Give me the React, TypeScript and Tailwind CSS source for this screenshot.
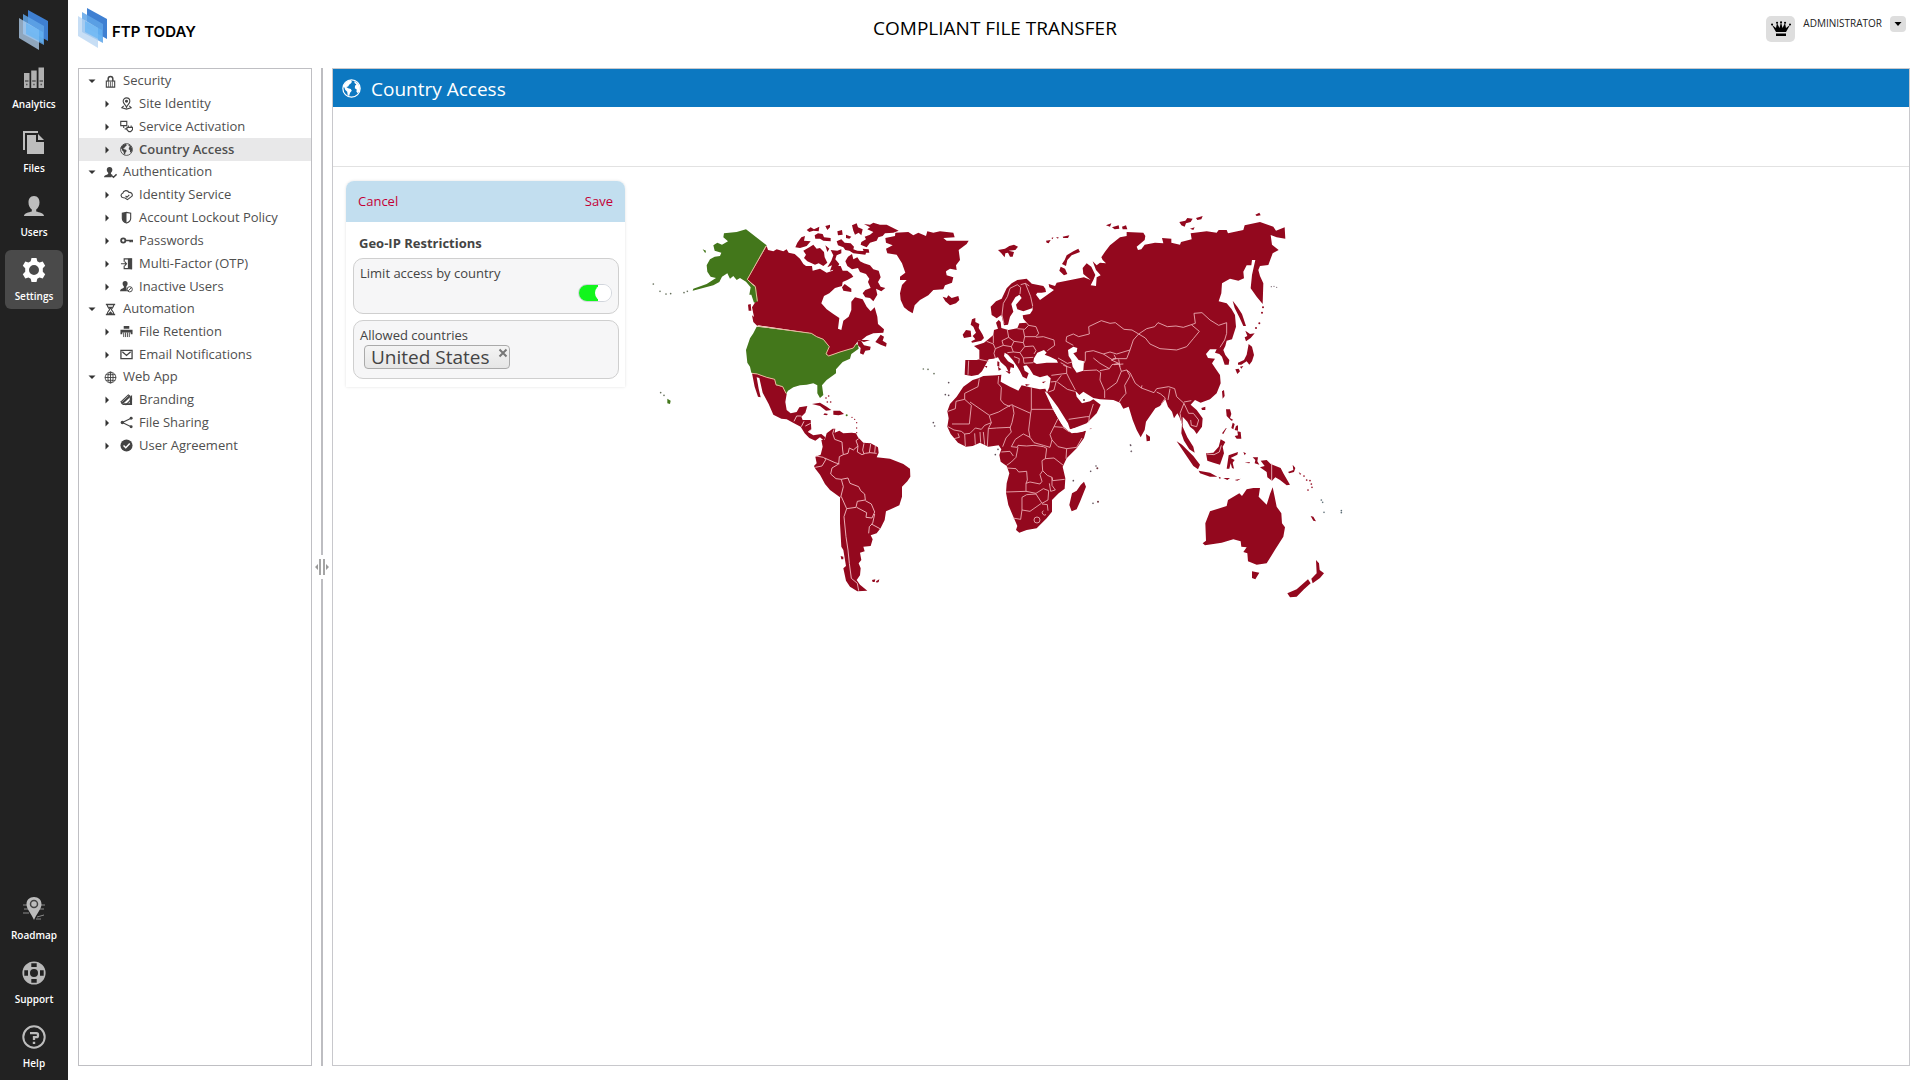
import type { ReactNode } from 'react';

const RED = '#93081e';
const GREEN = '#43771b';

/* ---------- logo ---------- */
function Logo({ size }: { size: string }) {
  return (
    <svg viewBox="0 0 30 40" className={size} aria-hidden="true">
      <path d="M9 0l20 11v20L9 20z" fill="#3f80d2" />
      <path d="M4 4l21 12v19L4 24z" fill="#5fa4e8" opacity=".85" />
      <path d="M0 8l20 12v20L0 28z" fill="#b4d3f2" opacity=".75" />
      <path d="M7 13l17 9v11L7 24z" fill="#62b3f5" opacity=".7" />
    </svg>
  );
}

/* ---------- rail icons ---------- */
const railIcons: Record<string, ReactNode> = {
  Analytics: (
    <>
      <path d="M2 7h5.500v15H2zM9.200 4.500h5.500V22H9.200zM16.500 1.500H22V22h-5.500z" fill="#b0b0b0" />
      <path d="M3 15h3.500M10.200 15h3.500M17.500 15H21M4 18.500h1.500M11.200 18.500h1.500M18.500 18.500H20" stroke="#555" strokeWidth="1.600" />
    </>
  ),
  Files: (
    <>
      <path d="M2 20V2h14" fill="none" stroke="#bdbdbd" strokeWidth="2" />
      <path d="M5 5h9v7h8v12H5z" fill="#bdbdbd" />
      <path d="M16 4l6 6h-6z" fill="#bdbdbd" />
    </>
  ),
  Users: (
    <path d="M12 2c4 0 5.500 3 5.500 6.500 0 3-1.300 5.500-3.300 7v2c3 1 7.800 1.500 7.800 4.500H2c0-3 4.800-3.500 7.800-4.500v-2c-2-1.500-3.300-4-3.300-7C6.500 5 8 2 12 2z" fill="#bdbdbd" />
  ),
  Settings: (
    <path
      fillRule="evenodd"
      fill="#fff"
      d="M9.500 0h5l.8 3.300 2.200 1.200 3.200-1 2.500 4.300-2.400 2.400v3.600l2.400 2.400-2.500 4.300-3.200-1-2.200 1.200-.8 3.300h-5l-.8-3.300-2.200-1.200-3.200 1L.8 16.200l2.400-2.400v-3.600L.8 7.800l2.500-4.300 3.200 1 2.200-1.200zM12 7a5 5 0 100 10 5 5 0 000-10z"
    />
  ),
  Roadmap: (
    <>
      <path d="M1 8h22M2 12h4M18 12h4M1 16h6M15 20l7-2M14 22h5" stroke="#8a8a8a" strokeWidth="1" />
      <path d="M12 0c4.500 0 7.500 3 7.500 7.200C19.500 12 15 16 12 23 9 16 4.500 12 4.500 7.200 4.500 3 7.500 0 12 0z" fill="#bdbdbd" />
      <circle cx="12" cy="7" r="3.500" fill="none" stroke="#444" strokeWidth="1.500" />
    </>
  ),
  Support: (
    <>
      <circle cx="12" cy="12" r="7.800" fill="none" stroke="#b8b8b8" strokeWidth="7.600" />
      <path d="M9.300 2.300h5.400V6H9.300zM9.300 18h5.400v3.700H9.300zM2.300 9.300H6v5.400H2.300zM18 9.300h3.700v5.400H18z" fill="#222" />
    </>
  ),
  Help: (
    <>
      <circle cx="12" cy="12" r="10.700" fill="none" stroke="#bdbdbd" strokeWidth="2" />
      <path d="M8 8.200h6.500q1.500 0 1.500 1.500v1.100q0 1.400-1.500 1.400H12v2.800" fill="none" stroke="#bdbdbd" strokeWidth="2.300" />
      <path d="M10.800 16.800h2.400v2.200h-2.400z" fill="#bdbdbd" />
    </>
  ),
};

function RailItem({ name, active }: { name: string; active?: boolean }) {
  return (
    <button
      type="button"
      className={
        'flex h-[59px] w-full flex-col items-center rounded-md pt-2 text-[10px] leading-4 font-semibold text-white ' +
        (active ? 'bg-[#4a4a4a]' : '')
      }
    >
      <svg viewBox="0 0 24 24" className="mb-1.5 size-6 shrink-0" aria-hidden="true">
        {railIcons[name]}
      </svg>
      {name}
    </button>
  );
}

/* ---------- globe ---------- */
function Globe({ className, color }: { className: string; color: string }) {
  return (
    <svg viewBox="0 0 20 20" className={className} aria-hidden="true">
      <circle cx="10" cy="10" r="9.100" fill="none" stroke={color} strokeWidth="1.300" />
      <path d="M2 6l3-3.500L9 1l1.500 2-1 1.500L7.500 6 6.500 8l-2 .5 2 1.200 2.800.8 1 1.800-1.800 2.200L7.500 18l-1.500-1-.5-3.500-2-2L2.500 9 1 8z" fill={color} />
      <path d="M13 2l4 3 1.700 4v3l-2 3-1.500-1.500.3-2.500-2-1.200.2-2.600 1.500-1.400-2-1.500z" fill={color} />
    </svg>
  );
}

/* ---------- tree icons ---------- */
const L = { fill: 'none', stroke: '#444', strokeWidth: 1.2 };
const F = { fill: '#444' };
const treeIcons: Record<string, ReactNode> = {
  Security: (
    <>
      <path d="M4.500 7V4a2.500 2.500 0 015 0v3" {...L} strokeWidth={1.6} />
      <path d="M2.500 6.500h9V13h-9z" {...L} />
      <path d="M5 7v6M7 7v6M9 7v6" {...L} strokeWidth={0.8} />
    </>
  ),
  'Site Identity': (
    <>
      <path d="M7 1a3.600 3.600 0 013.600 3.600C10.600 7 8 8.500 7 11 6 8.500 3.400 7 3.400 4.600A3.600 3.600 0 017 1z" {...L} />
      <circle cx="7" cy="4.600" r="1.600" {...F} />
      <path d="M4 9.500L2 11.500l5 1.500 5-1.500-2-2" {...L} />
    </>
  ),
  'Service Activation': (
    <>
      <path d="M.8 1.500h6.500v4.500H.8zM4 6v2.500" {...L} />
      <path d="M9 6v2M12 6v2M7.500 8h6v2.500l-2 2h-2l-2-2zM7.500 9.500H5" {...L} />
    </>
  ),
  Authentication: (
    <>
      <path d="M6 1c2 0 3 1.500 3 3 0 1.500-.7 2.500-1.500 3.200V8.500L9 9.500 8 12H0c0-2 2.500-2.500 4.500-3.500V7.200C3.700 6.500 3 5.500 3 4c0-1.500 1-3 3-3z" {...F} />
      <path d="M8.500 10.500l1.700 1.700L13.500 9" {...L} strokeWidth={1.500} />
    </>
  ),
  'Identity Service': (
    <>
      <path d="M5 10.500H3.500A2.500 2.500 0 013 5.600 3.600 3.600 0 019.700 4.800 2.900 2.900 0 0113 8.800" {...L} />
      <path d="M6 8.500l1.500 1.500L10 7.500M5 10.500l3 2 5-3.700" {...L} />
    </>
  ),
  'Account Lockout Policy': (
    <>
      <path d="M7 1.500l4.500 1V8c0 2-2 4-4.500 5C4.500 12 2.500 10 2.500 8V2.500z" {...L} />
      <path d="M7 1.500v11.500C4.500 12 2.500 10 2.500 8V2.500z" {...F} />
    </>
  ),
  Passwords: (
    <>
      <circle cx="3.500" cy="7" r="2.300" {...L} strokeWidth={2} />
      <path d="M6 7h8M11 7v2M13 7v2" {...L} strokeWidth={1.800} />
    </>
  ),
  'Multi-Factor (OTP)': (
    <>
      <path d="M4.500 5V2h8v10.500h-8v-3" {...L} />
      <path d="M8.500 2l4-.5v12l-4-1.500z" {...F} />
      <path d="M1 7.200h6M5 5l2 2.200L5 9.500" {...L} />
    </>
  ),
  'Inactive Users': (
    <>
      <path d="M5.500 1C7.300 1 8.200 2.300 8.200 3.700S7.500 6 6.900 6.700v1.300L7.500 12H0c0-2 2-2.700 4.100-3.700V6.700C3.500 6 2.800 5.100 2.800 3.700S3.700 1 5.500 1z" {...F} />
      <circle cx="10.500" cy="10" r="2.800" {...L} strokeWidth={1} />
      <path d="M8.600 12l3.800-4" {...L} strokeWidth={1} />
    </>
  ),
  Automation: (
    <>
      <path d="M2 1.500h10M2 12.500h10" {...L} strokeWidth={1.600} />
      <path d="M3.500 2c0 3 2.500 4 2.500 5s-2.500 2-2.500 5M10.500 2c0 3-2.500 4-2.500 5s2.500 2 2.500 5" {...L} />
      <path d="M4.500 4h5L7 7zM4 12l3-3 3 3z" {...F} />
    </>
  ),
  'File Retention': (
    <>
      <path d="M4 1h6v3H4zM.5 5h13v5h-2V8h-9v2h-2z" {...F} />
      <path d="M4 8v5M6 8v5M8 8v5M10 8v5" {...L} strokeWidth={1} />
    </>
  ),
  'Email Notifications': <path d="M1 2.500h12v9H1zM2.500 4L7 8l4.500-4" {...L} strokeWidth={1.400} />,
  'Web App': (
    <>
      <circle cx="7" cy="7" r="5.800" {...L} strokeWidth={1} />
      <ellipse cx="7" cy="7" rx="2.800" ry="5.800" {...L} strokeWidth={1} />
      <path d="M7 1v12M1 7h12M2 4h10M2 10h10" {...L} strokeWidth={1} />
    </>
  ),
  Branding: (
    <>
      <path d="M13 2v11H2l2-2h6.500V5z" {...F} />
      <path d="M1 9.500L9 2l2 1.500L3 11zM6 13l7-7" {...L} />
      <path d="M1.500 11.500L10 3.500" {...L} strokeWidth={1.800} />
    </>
  ),
  'File Sharing': (
    <>
      <path d="M12 2.500L2.500 7l9.500 4.500" {...L} />
      <circle cx="12" cy="2.500" r="1.600" {...F} />
      <circle cx="2.500" cy="7" r="1.800" {...F} />
      <circle cx="12" cy="11.500" r="1.600" {...F} />
    </>
  ),
  'User Agreement': (
    <>
      <circle cx="7" cy="7" r="6.500" {...F} />
      <path d="M3.800 7l2.400 2.400 4.300-4.600" fill="none" stroke="#fff" strokeWidth="1.600" />
    </>
  ),
};

function TreeIcon({ name }: { name: string }) {
  if (name === 'Country Access') return <Globe className="size-[13px] shrink-0" color="#444" />;
  return (
    <svg viewBox="0 0 14 14" className="size-[13px] shrink-0" aria-hidden="true">
      {treeIcons[name]}
    </svg>
  );
}

const tree = [
  { name: 'Security', items: ['Site Identity', 'Service Activation', 'Country Access'] },
  {
    name: 'Authentication',
    items: ['Identity Service', 'Account Lockout Policy', 'Passwords', 'Multi-Factor (OTP)', 'Inactive Users'],
  },
  { name: 'Automation', items: ['File Retention', 'Email Notifications'] },
  { name: 'Web App', items: ['Branding', 'File Sharing', 'User Agreement'] },
];

function Tree() {
  return (
    <ul className="pt-px text-[13px] text-[#4f4f4f]">
      {tree.map((group) => (
        <li key={group.name}>
          <button type="button" className="flex h-[22px] w-full items-center pl-[9px]">
            <svg viewBox="0 0 8 8" className="mr-2 size-2" aria-hidden="true">
              <path d="M.5 2.500h7L4 6z" fill="#333" />
            </svg>
            <TreeIcon name={group.name} />
            <span className="ml-1.5">{group.name}</span>
          </button>
          <ul>
            {group.items.map((item) => (
              <li key={item}>
                <button
                  type="button"
                  className={
                    'flex h-[23px] w-full items-center pl-6 ' +
                    (item === 'Country Access' ? 'bg-[#e8e8e9] font-semibold' : '')
                  }
                >
                  <svg viewBox="0 0 8 8" className="mr-[9px] size-2" aria-hidden="true">
                    <path d="M2.500 .5L6 4 2.500 7.500z" fill="#333" />
                  </svg>
                  <TreeIcon name={item} />
                  <span className="ml-1.5">{item}</span>
                </button>
              </li>
            ))}
          </ul>
        </li>
      ))}
    </ul>
  );
}

/* ---------- world map ---------- */
function Dots({ points, fill = RED, r = 2.5 }: { points: number[][]; fill?: string; r?: number }) {
  return (
    <>
      {points.map(([x, y]) => (
        <circle key={x + '-' + y} cx={x} cy={y} r={r} fill={fill} />
      ))}
    </>
  );
}

function WorldMap() {
  return (
    <svg viewBox="640 200 720 410" className="w-[720px] max-w-full" role="img" aria-label="World map of allowed countries">
      {/* North America */}
      <g transform="translate(640 200) scale(.33333)">
        <path
          fill={RED}
          d="M380 138L384 150 400 154 410 148 430 154 440 148 446 158 464 162 480 176 490 192 498 198 516 198 518 212 540 206 560 218 578 212 588 198 602 198 608 212 622 212 634 222 640 230 622 240 608 246 606 258 585 264 568 280 552 288 544 310 560 328 580 342 598 354 594 386 604 390 610 362 626 350 634 330 634 305 645 292 668 298 680 320 692 334 704 322 712 350 714 372 732 388 730 398 700 400 680 408 665 420 690 420 672 426 655 420 640 445 600 456 566 468 558 460 568 440 550 418 530 410 514 400 356 376 342 350 336 322 350 300 346 258 322 238Z
          M466 142L472 128 484 112 495 108 492 122 512 124 500 138 480 144Z
          M490 152L508 142 520 134 530 146 540 144 552 156 554 172 562 188 550 198 536 190 525 194 502 184 492 174 498 164Z
          M500 90L512 82 522 88 538 80 536 94 520 92 508 96Z M556 78L570 74 570 82 562 90Z M524 106L534 100 548 102 552 112 572 114 572 124 550 122 540 116 526 116Z M592 94L606 90 608 104 594 106Z
          M590 124L604 118 614 128 632 130 642 140 640 148 652 152 680 154 676 164 640 160 628 152 616 150 610 142 594 136Z
          M636 76L650 70 654 82 668 88 664 106 656 98 645 104 640 92Z
          M672 72L690 74 700 68 720 74 740 74 776 92 760 98 735 100 728 108 715 112 710 122 690 128 680 142 662 134 664 126 678 118 674 110 690 104 700 96 682 88 690 82Z
          M618 104L634 110 628 116 618 114Z M572 150L592 152 604 148 604 160 590 166 586 178 598 192 590 206 570 212 576 196 562 202 574 182 580 166Z M556 136L568 146 562 156Z
          M624 170L636 162 640 178 652 172 660 184 672 190 690 196 700 208 716 212 722 232 714 246 722 260 736 264 724 274 708 266 712 284 700 304 690 294 676 292 668 280 676 270 692 264 684 246 688 236 678 222 660 216 654 204 636 208 622 198 616 184Z
          M606 262L614 252 634 266 634 276 610 272Z M668 146L686 148 688 158 672 156Z
          M706 426L722 404 732 410 728 422 740 430 738 440 722 434Z M652 420L664 424 672 436 692 440 690 450 676 452 670 464 660 460 662 444 654 436Z
          M336 346L346 354 358 374 352 378 340 366Z M324 314L332 312 334 332 326 332Z
          M336 520L352 522 380 532 404 538 408 556 428 560 440 582 436 606 440 630 452 640 470 636 478 622 502 618 496 638 484 650 488 660 512 660 514 688 504 696 520 706 544 702 556 712 552 722 540 712 526 722 508 714 494 700 482 680 462 670 440 658 424 656 400 644 386 612 368 578 358 534 350 532 356 566 362 592 354 590 344 560Z
          M516 612L540 608 560 620 574 630 558 632 540 618Z M580 632L600 632 612 642 596 646 580 644Z M554 640L564 642 560 646 550 644Z"
        />
        <path
          fill={GREEN}
          d="M318 88L380 136 322 238 338 254 348 260 354 304 342 308 334 284 328 284 332 262 318 245 300 234 290 240 280 228 270 236 262 220 246 230 238 246 220 256 158 272 160 266 200 252 222 238 228 234 212 230 202 215 200 196 210 178 224 170 240 168 244 158 224 152 220 136 232 128 246 134 264 124 250 112 252 100 290 96Z
          M350 380L514 400 530 410 550 418 568 440 560 458 566 468 600 456 640 444 646 432 654 434 656 446 634 462 630 476 608 486 588 508 588 520 560 540 546 556 550 585 540 594 532 580 532 556 520 550 500 554 480 556 460 562 444 572 438 582 428 560 408 556 404 538 380 532 352 522 334 518 330 500 322 488 318 450 330 415 340 400Z
          M82 596L92 602 90 612 82 610Z M188 148L198 152 196 160Z"
        />
        <path
          fill="none"
          stroke="#e9b79a"
          strokeWidth="3"
          d="M378 138L322 238 338 254 346 260 352 304M352 378L514 400 530 410 550 418 568 440 558 462 566 468 600 456 640 444 648 432M336 520L352 522 380 532 404 538 408 554 428 560 438 580"
        />
        <path fill="none" stroke="#f0b8be" strokeWidth="3" d="M462 664L470 648 484 648M484 680L492 664M496 678L512 670M504 696L512 690" />
        <Dots points={[[40, 252], [60, 274], [78, 282], [92, 281], [132, 278], [142, 274], [62, 578], [72, 586], [850, 507], [864, 508], [882, 521]]} fill="#66705c" r={2.5} />
        <Dots points={[[558, 594], [566, 588], [572, 606], [562, 606]]} />
        <Dots points={[[620, 646]]} fill={GREEN} r={3} />
        <Dots points={[[636, 652], [644, 658], [650, 668], [650, 684], [650, 698]]} r={2} />
      </g>

      {/* Greenland and Iceland */}
      <g transform="translate(780 200) scale(.33333)" fill={RED}>
        <path d="M316 114L345 108 346 98 385 96 400 106 415 98 438 108 442 94 460 98 480 94 520 98 524 112 490 114 500 122 566 122 560 132 536 150 540 180 528 196 530 210 510 206 498 214 500 226 520 232 516 248 495 256 490 268 460 270 445 286 420 300 404 316 398 340 385 332 372 322 362 300 360 280 366 255 380 240 360 240 360 230 376 218 366 190 350 164 322 160 318 146 338 136 318 128Z" />
        <path d="M488 290L500 294 505 286 515 294 535 288 538 300 528 310 510 316 496 304Z" />
        <path d="M498 216L520 218 522 224 504 226Z" fill="#fff" />
      </g>

      {/* South America */}
      <g transform="translate(780 390) scale(.33333)">
        <path
          fill={RED}
          d="M124 150L134 150 140 130 158 116 166 116 164 128 178 122 190 130 215 128 228 130 234 142 250 158 272 160 294 172 296 188 290 202 330 206 370 222 390 236 391 260 382 274 366 290 366 320 358 346 345 352 318 364 314 390 302 414 290 430 272 436 278 448 272 468 250 470 254 484 240 488 244 510 236 520 242 535 240 556 230 570 240 584 262 602 232 604 210 590 198 572 190 535 198 528 190 480 184 470 180 400 180 322 150 300 135 282 120 254 106 236 102 228 110 220 106 200 122 194 128 170Z
          M182 498L190 500 190 508 184 508Z M276 570L286 568 284 576 278 576Z M288 574L298 568 296 576 290 578Z"
        />
        <path
          fill="none"
          stroke="#f0b8be"
          strokeWidth="2.800"
          d="M162 118L158 130 164 148 186 156 188 180 190 194 178 200 176 222M190 194L204 190 208 174 220 180 234 168 228 152 236 146M234 168L232 186 246 194 256 190 270 188 290 190M252 160L248 180 252 192M272 162L268 188M286 168L284 188M108 198L130 202 138 208 126 228 106 232M134 204L165 218 178 222 M176 222L156 234 152 252 168 266 184 268 190 290 182 322 M184 268L204 264 210 280 236 290 242 302 254 312 256 330 232 334 228 352 200 356 184 320M256 332L274 342 284 366 276 384 258 382 260 368 230 352M284 372L278 400 268 410 266 430M274 402L300 416M200 356L192 380 198 440 204 480 208 520 214 565 232 580 236 602"
        />
      </g>

      {/* Africa, Europe and western Asia */}
      <g transform="translate(930 200) scale(.33333)">
        <path
          fill={RED}
          d="M145 535L160 528 200 526 214 524 212 545 240 560 265 572 275 556 300 562 330 568 346 566 352 580 368 624 384 655 400 680 418 694 440 698 468 692 462 714 440 745 410 775 398 800 406 835 404 866 386 880 366 900 366 935 350 955 320 985 290 990 268 998 258 990 262 978 250 950 235 915 228 878 230 850 238 820 230 798 212 785 208 765 214 748 206 736 175 740 150 728 128 738 108 740 84 728 62 702 52 680 56 655 52 634 60 612 80 590 100 560 128 540Z
          M462 845L468 860 450 905 440 928 425 934 418 915 426 880 440 872 452 855Z
          M182 320L198 304 215 296 230 265 245 250 262 240 290 236 304 250 310 300 306 325 280 334 262 328 258 314 275 294 268 284 256 292 244 312 250 335 240 350 234 374 222 376 214 345 200 355 185 345Z
          M126 358L136 354 136 366 148 372 146 384 158 404 162 414 154 422 126 428 124 424 136 418 128 408 138 398 130 380 122 374Z M98 404L108 390 122 392 124 410 102 414Z
          M204 150L225 146 238 138 252 134 264 140 256 150 236 152 252 156 248 170 240 170 234 158 226 160 224 172 214 160Z
          M445 146L450 156 425 166 412 180 408 198 396 192 404 180 410 166 430 154Z M392 200L405 206 412 222 402 226 388 212Z
          M348 122L362 120 356 130 350 128Z M364 114L370 112 368 118Z M378 112L386 112 384 116Z M398 110L418 106 414 114 400 114Z
          M202 484L208 486 208 500 202 498Z M204 500L214 508 206 512Z M226 512L242 516 238 522Z M286 552L300 554 288 558Z M336 546L348 544 340 550Z M164 498L172 498 170 504Z M474 684L486 684 480 688Z"
        />
        {/* Eurasian mainland */}
        <path
          fill={RED}
          d="M298 250L340 258 346 266 348 276 335 278 322 278 318 284 330 300 350 286 372 270 358 262 356 252 375 258 380 248 410 242 440 236 462 232 482 240 460 222 458 204 470 190 484 200 496 225 490 240 482 256 498 258 500 232 512 226 498 210 488 184 500 196 510 188 528 190 518 180 514 172 525 155 540 136 570 112 590 108 590 96 640 98 646 108 644 120 620 140 624 150 634 148 644 134 675 128 700 130 696 114 724 116 724 128 750 134 753 126 785 118 782 100 830 94 860 98 866 90 890 90 894 100 940 90 944 76 990 66 1030 80 1038 92 1064 82 1066 116 1040 112 1022 105 1026 134 1046 150 1028 160 1015 195 990 198 985 210 990 228 1000 250 998 312 980 290 962 265 966 225 976 180 966 180 964 196 950 196 940 215 942 235 925 242 900 236 876 250 874 280 866 304 890 310 904 326 915 345 918 380 906 418 890 422 886 438 880 450 886 465 898 480 896 494 884 494 876 470 868 462 855 458 860 448 840 448 828 462 834 474 855 476 846 490 858 508 870 525 872 550 860 580 840 598 812 608 795 600 782 614 800 630 818 655 816 680 800 702 792 690 780 680 772 665 758 650 758 680 772 712 790 740 794 758 778 748 762 722 754 700 756 672 748 650 742 640 732 655 726 635 714 620 706 598 690 618 676 625 648 665 644 690 632 712 620 690 608 660 596 620 580 626 570 608 550 600 510 598 490 594 460 575 448 585 436 572 440 590 456 610 480 604 490 598 512 614 500 640 470 670 418 690 412 680 390 640 370 610 350 580 358 562 362 535 352 526 330 532 310 524 298 505 290 496 280 498 284 512 296 520 290 536 278 530 270 514 262 500 248 480 234 464 224 458 222 468 234 484 252 494 252 504 242 502 238 520 228 500 212 486 204 472 190 476 176 478 166 496 156 514 145 524 125 528 104 524 106 480 140 480 148 478 148 450 132 438 162 428 175 418 190 405 192 390 204 386 198 368 206 360 212 366 214 384 235 390 262 385 268 370 290 368 280 356 278 346 300 342 308 330 306 300Z"
        />
        <path
          fill="#fff"
          d="M312 475L322 458 342 450 350 458 344 464 360 470 380 480 384 488 350 488 320 492 310 486Z M414 450L430 440 442 444 440 456 430 460 446 480 462 484 460 512 440 518 428 500 424 480 416 468Z M344 574L352 578 384 622 414 670 420 688 470 676 486 684 455 696 425 700 412 690 395 672 370 630Z"
        />
        <path
          fill="none"
          stroke="#f0b8be"
          strokeWidth="2.500"
          d="M148 536L144 560 120 572 104 580 104 598 78 604 76 626 54 634M104 598L124 616 118 672 66 672M120 606L178 646 206 636 240 616 248 614M206 528L204 550 214 562 212 600 222 612 240 620M304 562L304 628 370 628M304 628L302 640 248 616 252 640 246 668 240 684M302 640L296 690 300 712 280 702 256 718 244 740M178 648L184 668 164 676 154 688 136 684 120 700 104 702 94 694 72 690 54 680M184 668L175 686 172 738M175 686L200 684 240 682 244 696 228 714 218 740M104 702L106 738M134 700L136 734M150 696L152 728M160 696L164 734M84 700L88 712 72 716M300 712L312 728 340 736 360 742 366 720 360 704 372 680 384 656M372 680L398 682 418 696M366 720L384 740 410 746 440 742 456 714M410 746L408 776M244 740L262 742 264 736 290 738 312 736 340 740 350 745 346 776 336 782 338 812 330 824M264 742L258 772 244 786 230 796M214 756L240 754 250 768M346 776L372 774 400 796M338 812L352 826 366 832 368 842 404 838M230 804L258 806 266 816 290 814 292 840 288 850 288 874 228 876M288 850L300 846 330 852 336 844 330 824M366 832L366 856 376 870 362 874 358 850M288 874L318 880 340 866 356 872 354 900 336 910 318 882M318 882L290 884 276 892 276 930 272 958 248 954M276 930L300 934 334 910M340 932A7 7 0 10348 944M336 912L352 914 354 932M312 960A9 9 0 10330 960 9 9 0 10312 960"
        />
        <path
          fill="none"
          stroke="#f0b8be"
          strokeWidth="2.500"
          d="M222 372L216 345 220 310 232 290 240 265 262 254 272 262 270 282M272 254L286 250 298 258M286 250L302 290 308 318M116 482L114 524M148 478L176 484M170 424L190 432 196 446 192 460 196 474M190 406L190 430M232 390L236 412 216 422 220 436 196 446M236 412L252 424 280 428 284 410 280 390M262 386L284 388 296 376 284 362M296 376L318 380 326 400 318 410 284 410M318 412L340 410 372 420 374 436 352 452M280 428L284 440 310 438 318 452 312 462M220 436L244 440 252 424M244 440L250 456 232 458M250 456L270 458 284 440M270 458L280 474 310 472M252 470L268 476 266 490M280 474L282 490 310 488M384 474L412 490 428 486M392 488L410 498 410 520 364 526M400 496L424 504M410 520L420 540 436 570M362 546L380 544 394 526M378 546L372 570 356 576M382 546L412 568 434 574M416 658L470 650 478 650 490 612M478 650L476 668M430 436L408 424 410 410 430 402 446 410 478 402 476 380 514 362 540 370 556 368 582 388 606 390 626 402 610 420 600 450 560 462 540 456 520 462 490 452 466 456 466 480 462 490M460 512L500 510 512 518 510 540 524 572 524 594M490 474L510 490 538 506 510 512M538 506L546 494 566 490M566 490L574 514 560 548 530 570M566 490L544 480 558 476 552 464M574 514L590 510 600 528 584 556 588 580 574 596 568 606M590 510L600 518 616 550 634 564 672 578 680 566 716 560 734 566 740 590M548 476L590 476 600 450M552 494L580 492M566 478L570 500M520 462L548 480M634 564L636 556M680 576L692 582 706 594 694 612"
        />
        <path
          fill="none"
          stroke="#f0b8be"
          strokeWidth="2.500"
          d="M626 402L650 386 674 380 684 368 712 380 738 378 760 382 784 374 808 394 790 416 770 440 740 450 690 446 660 432 646 414ZM784 374L796 370 792 340 816 338 840 360 866 376 890 368 890 400 884 420 870 442M740 590L762 610 750 640 756 672M762 606L784 602M762 610L776 640 790 640 806 660 800 680 784 676 782 660M714 600L720 566"
        />
        <Dots points={[[56, 548], [46, 584], [56, 586], [10, 668], [14, 678], [602, 736], [604, 754], [498, 798], [482, 814], [430, 842], [489, 910], [204, 748], [196, 764]]} fill="#60505a" r={2.5} />
        <Dots points={[[502, 805], [504, 905], [462, 600]]} fill="#703840" r={3} />
      </g>

      {/* Far East islands */}
      <g transform="translate(1100 200) scale(.33333)">
        <path
          fill={RED}
          d="M18 76L34 70 30 80Z M36 82L56 76 58 86 44 88Z M66 80L78 76 82 88 68 88Z M238 66L256 62 262 54 278 56 272 66 258 70 254 80 244 76Z M288 54L308 48 304 58 292 60Z M270 86L284 82 280 90Z M466 44L478 38 482 46 470 48Z
          M398 302L412 320 426 342 438 378 430 378 418 352 404 324Z
          M436 392L450 402 464 400 452 414 438 424 434 412 442 408Z M446 432L456 440 462 465 456 484 448 494 440 484 424 494 414 494 414 488 432 480 440 464Z M406 508L416 506 420 514 412 522Z M420 500L430 498 424 506Z
          M366 574L372 570 374 588 368 596Z M304 624L316 620 316 630 306 630Z M138 702L150 710 150 722 140 724Z
          M378 628L390 628 394 642 390 654 400 660 394 662 380 648Z M398 668L404 672 400 688 394 684Z M408 678L414 676 414 692 404 690Z M412 694L422 696 424 716 410 716 404 708 414 706Z M380 684L370 702 366 700 378 684Z"
        />
        <Dots points={[[489, 322], [486, 338], [478, 370], [468, 384]]} r={3} />
        <Dots points={[[514, 260], [522, 259], [530, 262], [91, 734], [94, 754]]} fill="#80707a" r={2} />
      </g>

      {/* Indonesia and Oceania */}
      <g transform="translate(1150 400) scale(.33333)">
        <path
          fill={RED}
          d="M158 430L168 422 166 370 180 334 230 318 234 300 268 280 276 288 290 268 310 264 330 264 326 290 350 314 360 282 368 262 374 290 380 320 394 340 396 370 405 382 400 410 376 448 350 490 320 494 294 484 292 460 280 456 290 442 274 440 272 424 250 418 215 428 165 436Z
          M306 514L328 518 316 538 306 534Z M498 480L507 490 509 510 522 520 510 534 488 550 484 536 500 520Z M474 538L482 550 462 568 440 590 420 592 412 580 440 568Z
          M332 182L350 180 362 192 392 204 400 220 420 254 410 256 390 240 376 232 366 242 352 232 350 216 330 202 344 198Z M308 172L324 172 322 184 328 194 314 190 316 180Z
          M168 160L190 158 206 140 212 118 226 126 218 140 222 160 210 194 190 188 172 182Z M80 124L96 134 130 168 150 194 144 208 130 198 104 160Z M146 212L180 218 202 230 180 230 150 220Z
          M236 166L264 156 262 164 242 174 254 180 248 188 252 206 246 204 242 190 238 206 230 206Z M280 156L288 160 284 166Z M284 188L300 186 298 190Z M206 230L214 234 208 236Z M220 234L240 234 232 240Z M254 240L272 236 262 242Z
          M414 216L430 210 428 194 436 204 432 216 418 220Z M446 216L454 222 450 224Z M482 348L490 350 498 364 490 362Z"
        />
        <path d="M365 190V242M170 162L192 164 208 156 214 136" fill="none" stroke="#f4c8cc" strokeWidth="2.500" />
        <Dots points={[[462, 228], [470, 240], [480, 242], [484, 252], [486, 262], [474, 270]]} r={2.5} />
        <Dots points={[[514, 300], [518, 307], [522, 337], [574, 332], [574, 338]]} fill="#607078" r={2.5} />
      </g>
    </svg>
  );
}

/* ---------- settings card ---------- */
function RestrictionCard() {
  return (
    <form className="w-[279px] shrink-0 rounded-t-lg pb-2 text-[13px] text-[#444] shadow-[0_0_3px_rgba(0,0,0,0.12)]">
      <div className="flex h-[41px] items-center justify-between rounded-t-lg bg-[#c2deef] px-3 text-[#c40036]">
        <button type="button">Cancel</button>
        <button type="button">Save</button>
      </div>
      <div className="flex flex-col gap-1.5 pr-1.5 pl-[7px]">
        <h2 className="mt-3 px-1.5 leading-[18px] font-bold">Geo-IP Restrictions</h2>
        <div className="flex h-14 flex-col justify-between rounded-[10px] border border-[#cfcfcf] bg-[#f6f6f7] px-1.5 pt-1.5 pb-[11px]">
          <label htmlFor="limit" className="leading-4">
            Limit access by country
          </label>
          <input
            id="limit"
            type="checkbox"
            role="switch"
            defaultChecked
            className="flex h-[18px] w-[34px] shrink-0 appearance-none justify-end self-end rounded-full border border-gray-300 bg-white before:size-4 before:rounded-full before:bg-white checked:bg-[linear-gradient(90deg,#12f51c_60%,#fff_60%)]"
          />
        </div>
        <div className="flex h-[59px] flex-col rounded-[10px] border border-[#cfcfcf] bg-[#f6f6f7] px-1.5 pt-1.5">
          <span className="leading-4">Allowed countries</span>
          <div className="mt-0.5 ml-1 flex h-6 w-[146px] items-center justify-between rounded-sm border border-[#aaa] bg-linear-to-b from-[#f4f4f4] to-[#e6e6e6] pl-1.5 text-[19px] leading-5">
            United States
            <button type="button" aria-label="Remove United States" className="self-start p-px pt-0.5">
              <svg viewBox="0 0 10 10" className="size-2.5" aria-hidden="true">
                <path d="M1.500 1.500l7 7M8.500 1.500l-7 7" stroke="#777" strokeWidth="2" />
              </svg>
            </button>
          </div>
        </div>
      </div>
    </form>
  );
}

export default function App() {
  return (
    <div className="flex min-h-screen bg-white font-['Open_Sans',sans-serif] text-[#333]">
      <nav className="flex w-[68px] shrink-0 flex-col gap-[5px] bg-[#222] px-[5px] pb-1" aria-label="Main">
        <div className="flex h-[53px] items-end justify-center pb-[3px]">
          <Logo size="h-10 w-[30px]" />
        </div>
        <RailItem name="Analytics" />
        <RailItem name="Files" />
        <RailItem name="Users" />
        <RailItem name="Settings" active />
        <div className="grow" />
        <RailItem name="Roadmap" />
        <RailItem name="Support" />
        <RailItem name="Help" />
      </nav>

      <div className="flex min-w-0 grow flex-col">
        <header className="grid h-[68px] grid-cols-[1fr_auto_1fr] items-start pr-[14px] pl-4">
          <div className="-ml-1.5 flex items-center pt-2">
            <Logo size="h-10 w-[30px]" />
            <span className="ml-1 pt-2 font-['Inter',sans-serif] text-[15px] leading-6 font-semibold text-black">FTP TODAY</span>
          </div>
          <h1 className="pt-4 text-[19px] leading-6 text-black">COMPLIANT FILE TRANSFER</h1>
          <div className="flex items-start justify-end pt-4 text-[10px] leading-[14px] text-[#222]">
            <span className="flex h-[26px] w-[29px] items-center justify-center rounded-[5px] bg-[#dedede]">
              <svg viewBox="0 0 20 16" className="h-4 w-5" aria-hidden="true">
                <path d="M5 11L1 4l4 3 1-5 2.500 5L10 1l1.500 6L14 2l1 5 4-3-4 7zM5 12.500h10V15H5z" fill="#000" />
                <path d="M1 3.500h.1M6 1.700h.1M10 1.200h.1M14 1.700h.1M19 3.500h.1" stroke="#000" strokeWidth="2" strokeLinecap="round" />
              </svg>
            </span>
            <span className="ml-2">ADMINISTRATOR</span>
            <button type="button" aria-label="Account menu" className="ml-2 flex size-4 items-center justify-center rounded bg-[#dedede]">
              <svg viewBox="0 0 8 8" className="size-2" aria-hidden="true">
                <path d="M.5 2h7L4 6z" fill="#000" />
              </svg>
            </button>
          </div>
        </header>

        <div className="flex grow pr-[10px] pb-[14px] pl-[10px]">
          <aside className="w-[234px] shrink-0 border border-[#bfbfc3]">
            <Tree />
          </aside>

          <div className="flex w-5 shrink-0 flex-col items-center" role="separator" aria-orientation="vertical">
            <div className="w-0.5 grow bg-[#bdbdc1]" />
            <svg viewBox="0 0 16 24" className="h-6 w-4" aria-hidden="true">
              <path d="M6 4v16M10 4v16" stroke="#888" strokeWidth="1.500" />
              <path d="M4 9L1 12l3 3zM12 9l3 3-3 3z" fill="#999" />
            </svg>
            <div className="w-0.5 grow bg-[#bdbdc1]" />
          </div>

          <main className="min-w-0 grow border border-[#c8c8cc]">
            <div className="flex h-[38px] items-center gap-2.5 bg-[#0c78c1] px-[9px] text-white">
              <Globe className="size-[19px]" color="#fff" />
              <h2 className="pt-0.5 text-[19px] leading-7">Country Access</h2>
            </div>
            <div className="h-[60px] border-b border-[#e2e2e2]" />
            <div className="flex items-start gap-[15px] pt-[14px] pl-[13px]">
              <RestrictionCard />
              <div className="min-w-0 pt-[19px]">
                <WorldMap />
              </div>
            </div>
          </main>
        </div>
      </div>
    </div>
  );
}
